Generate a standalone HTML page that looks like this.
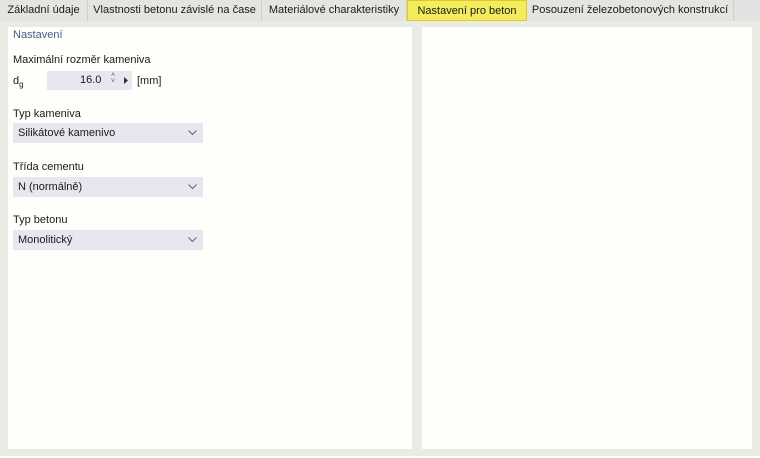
<!DOCTYPE html>
<html><head><meta charset="utf-8"><style>
*{margin:0;padding:0;box-sizing:border-box}
body{width:760px;height:458px;background:#ebebe6;font-family:"Liberation Sans",sans-serif;font-size:11px;color:#1a1a1a;position:relative;overflow:hidden}
.tabs{position:absolute;left:0;top:0;width:760px;height:21px;background:#e2e2e2}
.tab{position:absolute;top:0;height:21px;line-height:21px;text-align:center;background:#e4e4e0;border-right:1px solid #d0d0cc;white-space:nowrap}
.act{background:#f3ec5c;border:1px solid #e2c830;height:21px}
.panel{position:absolute;background:#fefefa;top:27px;height:422px}
.a{position:absolute}
.dd{position:absolute;left:13px;width:190px;height:20px;background:#e7e7ef;line-height:20px;padding-left:5px}
.dd svg{position:absolute;right:6px;top:7px}
.hl{position:absolute;left:0;top:456px;width:760px;height:2px;background:#fff}
</style></head><body>
<div class="tabs">
<div class="tab" style="left:0;width:88px">Základní údaje</div>
<div class="tab" style="left:88px;width:174px">Vlastnosti betonu závislé na čase</div>
<div class="tab" style="left:262px;width:145px">Materiálové charakteristiky</div>
<div class="tab act" style="left:407px;width:120px">Nastavení pro beton</div>
<div class="tab" style="left:527px;width:207px">Posouzení železobetonových konstrukcí</div>
</div>
<div class="panel" style="left:8px;width:404px"></div>
<div class="panel" style="left:422px;width:330px"></div>
<div class="hl"></div>
<div class="a" style="left:13px;top:29px;color:#4a5a8a">Nastavení</div>
<div class="a" style="left:13px;top:54px">Maximální rozměr kameniva</div>
<div class="a" style="left:13px;top:75px">d<sub style="font-size:8px">g</sub></div>
<div class="a" style="left:47px;top:71px;width:85px;height:19px;background:#e7e7ef"></div>
<div class="a" style="left:80px;top:74px">16.0</div>
<div class="a" style="left:111px;top:73px;font-size:7px;line-height:6px;color:#555">˄<br>˅</div>
<svg class="a" style="left:124px;top:77px" width="5" height="7"><path d="M0 0L4 3.5L0 7Z" fill="#333"/></svg>
<div class="a" style="left:137px;top:75px">[mm]</div>
<div class="a" style="left:13px;top:108px">Typ kameniva</div>
<div class="dd" style="top:123px">Silikátové kamenivo<svg width="9" height="6"><path d="M0.5 0.5L4.5 4.5L8.5 0.5" stroke="#666" fill="none"/></svg></div>
<div class="a" style="left:13px;top:161px">Třída cementu</div>
<div class="dd" style="top:177px">N (normálně)<svg width="9" height="6"><path d="M0.5 0.5L4.5 4.5L8.5 0.5" stroke="#666" fill="none"/></svg></div>
<div class="a" style="left:13px;top:214px">Typ betonu</div>
<div class="dd" style="top:230px">Monolitický<svg width="9" height="6"><path d="M0.5 0.5L4.5 4.5L8.5 0.5" stroke="#666" fill="none"/></svg></div>
</body></html>
